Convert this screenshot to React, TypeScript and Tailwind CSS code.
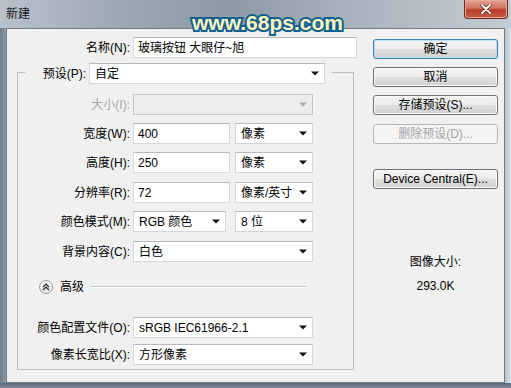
import React from "react";

const Arrow = ({ disabled }: { disabled?: boolean }) => (
  <svg width="8" height="5" viewBox="0 0 8 5" className="shrink-0">
    <path d="M0 0.5h8L4 4.5z" fill={disabled ? "#a9a9a9" : "#111111"} />
  </svg>
);

function Select({
  value,
  className,
  disabled,
}: {
  value?: string;
  className: string;
  disabled?: boolean;
}) {
  return (
    <div
      className={`h-[21px] flex items-center justify-between pl-[5px] pr-[5px] border ${
        disabled
          ? "border-[#c6c6c6] bg-[#ededed]"
          : "border-[#d3d5d9] border-t-[#b7b9bd] bg-white"
      } ${className}`}
    >
      <span className="whitespace-nowrap">{value}</span>
      <Arrow disabled={disabled} />
    </div>
  );
}

function Input({ value, className }: { value: string; className: string }) {
  return (
    <div
      className={`h-[21px] flex items-center pl-[4px] border border-[#d6d8dc] border-t-[#b5b7bb] bg-white whitespace-nowrap ${className}`}
    >
      {value}
    </div>
  );
}

function Label({ text, disabled }: { text: string; disabled?: boolean }) {
  return (
    <div
      className={`w-[115px] shrink-0 text-right pr-[3px] whitespace-nowrap ${
        disabled ? "text-[#a7a7a7]" : "text-black"
      }`}
    >
      {text}
    </div>
  );
}

function Button({
  text,
  variant,
  className,
}: {
  text: string;
  variant?: "default" | "disabled";
  className: string;
}) {
  if (variant === "disabled") {
    return (
      <div
        className={`h-[20px] w-[125px] flex items-center justify-center rounded-[3px] border border-[#b4b8bb] bg-[#f4f4f4] text-[#a3a3a3] ${className}`}
      >
        {text}
      </div>
    );
  }
  return (
    <div
      className={`h-[20px] w-[125px] flex items-center justify-center rounded-[3px] border ${
        variant === "default"
          ? "border-[#3c7fb1] shadow-[inset_0_0_0_1px_#b6e3f8]"
          : "border-[#707070] shadow-[inset_0_0_0_1px_#fbfbfb]"
      } bg-[linear-gradient(to_bottom,#f3f3f3_0%,#ececec_50%,#dfdfdf_50%,#d2d2d2_100%)] text-black ${className}`}
    >
      {text}
    </div>
  );
}

export default function App() {
  return (
    <div className="relative w-[511px] h-[388px] overflow-hidden flex flex-col bg-[#8f9ba7] text-[12px] leading-[16px] font-['Liberation_Sans','Noto_Sans_CJK_SC',sans-serif]">
      {/* title bar */}
      <div className="h-[28px] shrink-0 flex items-start justify-between bg-[linear-gradient(to_right,#b9c2cb_0%,#9aa6b2_25%,#8d99a5_45%,#aab4be_70%,#c4cbd2_100%)]">
        <span className="ml-[6px] mt-[6px] text-[#141414]">新建</span>
        <div className="mr-[3px] w-[44px] h-[19px] flex items-center justify-center rounded-b-[4px] border border-t-0 border-[#6b2a20] bg-[linear-gradient(to_bottom,#e3a497_0%,#d1715f_45%,#b9402c_55%,#c65a45_100%)] shadow-[inset_0_0_0_1px_#e9a898]">
          <svg width="12" height="10" viewBox="0 0 12 10">
            <path
              d="M2 1l8 8M10 1l-8 8"
              stroke="#5a1d14"
              strokeWidth="3.2"
              strokeLinecap="round"
            />
            <path
              d="M2 1l8 8M10 1l-8 8"
              stroke="#ffffff"
              strokeWidth="2"
              strokeLinecap="round"
            />
          </svg>
        </div>
      </div>

      {/* frame + client */}
      <div className="h-[355px] shrink-0 flex">
        <div className="w-[6px] bg-[linear-gradient(to_right,#6f7e8c,#8c99a6)]" />
        <div className="w-[499px] h-full border border-[#6f7d8b] bg-[#f0f0f0] flex">
          {/* left column */}
          <div className="w-[350px] flex flex-col">
            <div className="mt-[8px] h-[21px] flex items-center">
              <div className="w-[126px] text-right pr-[3px]">名称(N):</div>
              <Input
                value="玻璃按钮 大眼仔~旭"
                className="w-[224px] border-[#aad0e2] border-t-[#9bc4d8]"
              />
            </div>

            <div className="mt-[14px] ml-[10px] w-[337px] h-[298px] border border-[#bdbdbd] flex flex-col">
              <div className="-mt-[10px] h-[21px] flex items-center">
                <div className="w-[7px]" />
                <div className="w-[64px] h-full flex items-center justify-end pr-[3px] bg-[#f0f0f0]">
                  预设(P):
                </div>
                <Select value="自定" className="w-[236px]" />
                <div className="w-[7px] h-full bg-[#f0f0f0]" />
              </div>

              <div className="mt-[10px] flex items-center">
                <Label text="大小(I):" disabled />
                <Select disabled className="w-[180px]" />
              </div>

              <div className="mt-[8px] flex items-center">
                <Label text="宽度(W):" />
                <Input value="400" className="w-[97px]" />
                <Select value="像素" className="ml-[5px] w-[78px]" />
              </div>

              <div className="mt-[8px] flex items-center">
                <Label text="高度(H):" />
                <Input value="250" className="w-[97px]" />
                <Select value="像素" className="ml-[5px] w-[78px]" />
              </div>

              <div className="mt-[9px] flex items-center">
                <Label text="分辨率(R):" />
                <Input value="72" className="w-[97px]" />
                <Select value="像素/英寸" className="ml-[5px] w-[78px]" />
              </div>

              <div className="mt-[8px] flex items-center">
                <Label text="颜色模式(M):" />
                <Select value="RGB 颜色" className="w-[93px]" />
                <Select value="8 位" className="ml-[9px] w-[78px]" />
              </div>

              <div className="mt-[9px] flex items-center">
                <Label text="背景内容(C):" />
                <Select value="白色" className="w-[180px]" />
              </div>

              <div className="mt-[17px] h-[16px] flex items-center">
                <div className="ml-[21px] w-[14px] h-[14px] rounded-full border border-[#9a9a9a] bg-[linear-gradient(to_bottom,#ffffff,#e2e2e2)] flex items-center justify-center">
                  <svg width="8" height="8" viewBox="0 0 8 8">
                    <path
                      d="M1 4l3-3 3 3M1 7l3-3 3 3"
                      fill="none"
                      stroke="#222"
                      strokeWidth="1.2"
                    />
                  </svg>
                </div>
                <span className="ml-[7px]">高级</span>
                <div className="ml-[6px] mr-[47px] flex-1 border-t border-[#c4c4c4] border-b border-b-white" />
              </div>

              <div className="mt-[22px] flex items-center">
                <Label text="颜色配置文件(O):" />
                <Select value="sRGB IEC61966-2.1" className="w-[180px]" />
              </div>

              <div className="mt-[6px] flex items-center">
                <Label text="像素长宽比(X):" />
                <Select value="方形像素" className="w-[180px]" />
              </div>
            </div>
          </div>

          {/* right column */}
          <div className="ml-[16px] w-[125px] flex flex-col">
            <Button text="确定" variant="default" className="mt-[10px]" />
            <Button text="取消" className="mt-[8px]" />
            <Button text="存储预设(S)..." className="mt-[8px]" />
            <Button text="删除预设(D)..." variant="disabled" className="mt-[9px]" />
            <Button text="Device Central(E)..." className="mt-[25px]" />
            <div className="mt-[65px] text-center">图像大小:</div>
            <div className="mt-[8px] text-center">293.0K</div>
          </div>
        </div>
        <div className="w-[6px] bg-[linear-gradient(to_right,#b9c2ca,#dde2e7)]" />
      </div>
      <div className="h-[5px] shrink-0 bg-[linear-gradient(to_bottom,#5b6a78,#7d8b98)]" />

      {/* watermark */}
      <div className="absolute left-[192px] top-[12px] text-[21px] leading-[22px] font-bold text-[#fff6c4] [-webkit-text-stroke:4px_#11618f] [paint-order:stroke_fill] font-['Liberation_Sans',sans-serif]">
        www.68ps.com
      </div>
    </div>
  );
}
